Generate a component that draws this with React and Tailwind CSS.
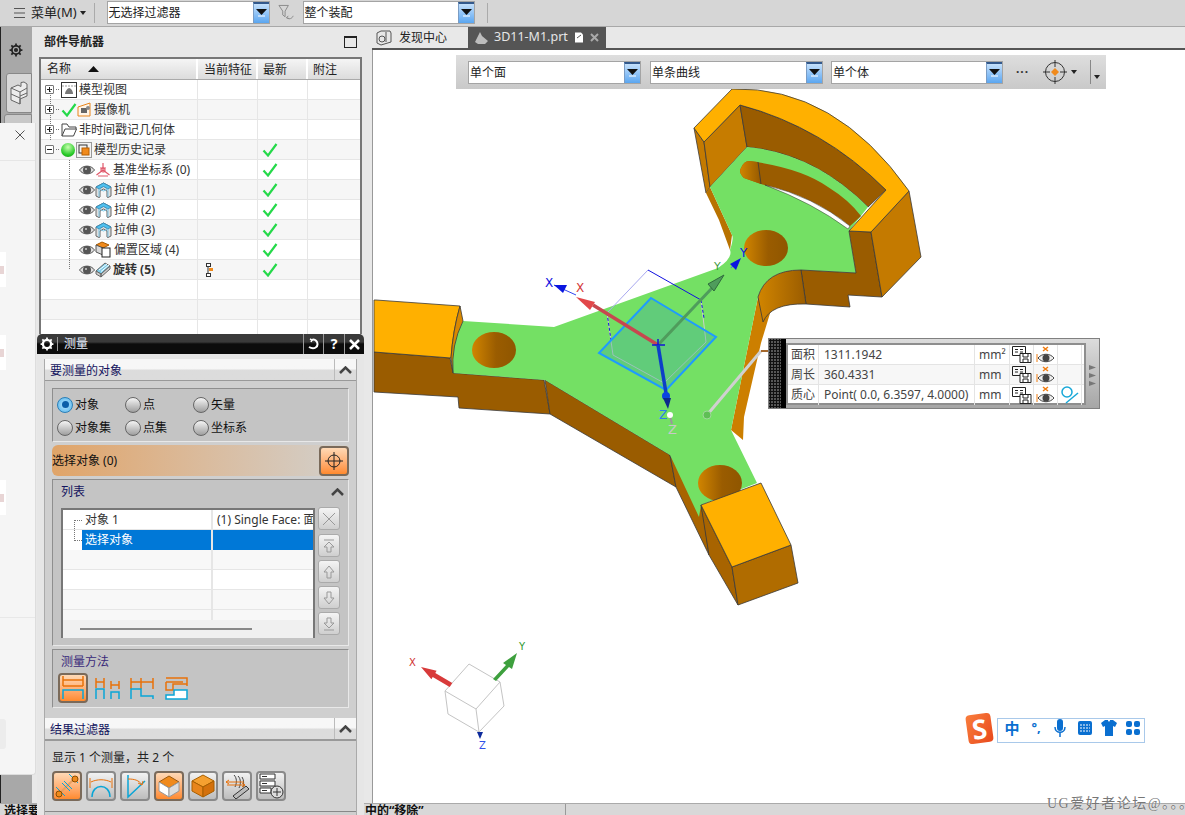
import React from "react";

const Combo = ({ text, w }) => (
  <div className={`flex h-[23px] items-stretch border border-[#a4a4a4] bg-white ${w}`}>
    <span className="flex-1 overflow-hidden whitespace-nowrap pl-[1px] text-[12px] leading-[21px] text-[#222]">{text}</span>
    <span className="flex w-[16px] items-center justify-center border-t-2 border-t-[#33598c] border-l border-l-[#7a9cc4] bg-gradient-to-b from-[#c4e0fb] to-[#5aa6f0]">
      <svg width="11" height="9" viewBox="0 0 11 9"><path d="M0 0h11L5.500 6z" fill="#111" /><path d="M2 7h7" stroke="#fff" /></svg>
    </span>
  </div>
);

const Check = () => (
  <svg width="16" height="14" viewBox="0 0 16 14" className="shrink-0"><path d="M1.500 7.500 6 12.500 14.500 1" fill="none" stroke="#25d94a" strokeWidth="2.200" /></svg>
);
const Eye = () => (
  <svg width="16" height="12" viewBox="0 0 16 12" className="shrink-0">
    <path d="M.5 6C4 .8 12 .8 15.500 6 12 11.200 4 11.200.5 6z" fill="#ddd" stroke="#555" />
    <circle cx="8" cy="6" r="4" fill="#555" />
    <circle cx="7" cy="5" r="1" fill="#ccc" />
  </svg>
);
const Extrude = () => (
  <svg width="17" height="16" viewBox="0 0 17 16" className="shrink-0">
    <path d="M1 5 8.500 1 16 5v9l-3 1.500-1-.5V9L8.500 7 5 9v6l-1 .5L1 14z" fill="#dedede" stroke="#666" />
    <path d="M1 5 8.500 1 16 5l-3 2-4.500-2.500L4 7z" fill="#4fc0ee" stroke="#3a8eb8" />
    <path d="M4 7v8M13 7v8M4 7l4.500 2L13 7" stroke="#7cc8e8" fill="none" />
  </svg>
);
const Datum = () => (
  <svg width="16" height="16" viewBox="0 0 16 16" className="shrink-0" fill="none" stroke="#e0586a" strokeWidth="1.200">
    <path d="M8 1v7M8 8 1.500 13M8 8l6.500 5M3 14h10M5 6h6" />
    <circle cx="8" cy="8" r="2" />
  </svg>
);
const Offset = () => (
  <svg width="17" height="17" viewBox="0 0 17 17" className="shrink-0">
    <path d="M1 4 7 1l7 3-6 3z" fill="#f08a1c" stroke="#a85a00" />
    <path d="M1 4l7 3v7l-7-3z" fill="#d9d9d9" stroke="#555" />
    <rect x="7" y="7" width="8" height="9" fill="#fff" stroke="#222" />
  </svg>
);
const Revolve = () => (
  <svg width="16" height="16" viewBox="0 0 16 16" className="shrink-0">
    <path d="M1 9 10 1l5 3-9 8z" fill="#7ccbe8" stroke="#666" />
    <path d="M1 9l5 3v3l-5-3zM6 12l9-8v3l-9 8z" fill="#ccc" stroke="#666" />
    <path d="M4 8l8-6M6 9.500l8-6.500" stroke="#fff" />
  </svg>
);
const Plus = ({ minus }) => (
  <span className="flex h-[9px] w-[9px] shrink-0 items-center justify-center rounded-[1px] border border-[#777] bg-white">
    <svg width="7" height="7" viewBox="0 0 7 7"><path d={minus ? "M1 3.500h5" : "M1 3.500h5M3.500 1v5"} stroke="#222" /></svg>
  </span>
);

const navRows = [
  { t: "模型视图", plus: true, icons: <svg width="16" height="16" viewBox="0 0 16 16" className="shrink-0"><rect x=".5" y=".5" width="15" height="15" fill="#fff" stroke="#333" /><path d="M1 4h14" stroke="#999" strokeDasharray="2 1" /><path d="M4 12c0-3 3-6 4-6s4 2 4 6z" fill="#777" /></svg> },
  { t: "摄像机", plus: true, icons: <><Check /><svg width="15" height="15" viewBox="0 0 15 15" className="shrink-0"><path d="M1 5 13 1v13H1z" fill="#fff5e8" stroke="#e8851c" /><rect x="4" y="6" width="6" height="5" fill="#666" /><circle cx="11" cy="6" r="2" fill="#888" /></svg></> },
  { t: "非时间戳记几何体", plus: true, icons: <svg width="16" height="14" viewBox="0 0 16 14" className="shrink-0" fill="#fff" stroke="#444"><path d="M1 13V1h5l2 3h7v2" /><path d="M1 13l3-7h11.500l-3 7z" /></svg> },
  { t: "模型历史记录", plus: true, minus: true, latest: true, icons: <><span className="h-[14px] w-[14px] shrink-0 rounded-full bg-[radial-gradient(circle_at_50%_30%,#c8ffb0,#26c926_65%,#158a15)]" /><svg width="16" height="16" viewBox="0 0 16 16" className="ml-[1px] shrink-0"><rect x=".5" y=".5" width="15" height="15" fill="#f3f3f3" stroke="#999" /><rect x="3" y="3" width="8" height="8" fill="none" stroke="#333" /><rect x="6" y="6" width="7" height="7" fill="#f08a1c" stroke="#b85f00" /></svg></> },
  { t: "基准坐标系 (0)", child: true, latest: true, icon: <Datum /> },
  { t: "拉伸 (1)", child: true, latest: true, icon: <Extrude /> },
  { t: "拉伸 (2)", child: true, latest: true, icon: <Extrude /> },
  { t: "拉伸 (3)", child: true, latest: true, icon: <Extrude /> },
  { t: "偏置区域 (4)", child: true, latest: true, icon: <Offset /> },
  { t: "旋转 (5)", child: true, latest: true, icon: <Revolve />, bold: true, cur: true },
  { t: "" }, { t: "" }, { t: "" }, { t: "" },
];

const NavRow = ({ r, i }) => (
  <div className={`flex h-[20px] border-b border-[#e6e6e6] ${i % 2 ? "bg-[#f6f6f6]" : "bg-white"}`}>
    <div className={`flex w-[157px] shrink-0 items-center border-r border-[#e6e6e6] ${r.child ? "pl-[38px]" : "pl-[4px]"}`}>
      {r.plus && <Plus minus={r.minus} />}
      {r.plus && <span className="mx-[2px] w-[3px] border-t border-dotted border-[#777]" />}
      {r.icon ? <Eye /> : null}
      {r.icon}
      {r.icons}
      {r.t && <span className={`${r.child ? "ml-[2px]" : "ml-[2px]"} whitespace-nowrap text-[12px] text-[#333] ${r.bold ? "font-bold" : ""}`}>{r.t}</span>}
    </div>
    <div className="flex w-[60px] shrink-0 items-center justify-start border-r border-[#e6e6e6] pl-[8px]">
      {r.cur && (
        <svg width="8" height="14" viewBox="0 0 8 14"><path d="M2 2v10" stroke="#333" /><rect x=".5" y=".5" width="4" height="3" fill="#fff" stroke="#333" /><rect x="3" y="5" width="4" height="3" fill="#f08a1c" /><rect x=".5" y="10.500" width="4" height="3" fill="#fff" stroke="#333" /></svg>
      )}
    </div>
    <div className="flex w-[50px] shrink-0 items-center border-r border-[#e6e6e6] pl-[4px]">{r.latest && <Check />}</div>
    <div className="flex-1" />
  </div>
);

const Radio = ({ on, t, w }) => (
  <div className={`flex items-center ${w}`}>
    <span className={`flex h-[16px] w-[16px] items-center justify-center rounded-full border ${on ? "border-[#2a7fb8] bg-[radial-gradient(circle,#bfe8ff,#4fb2ea)]" : "border-[#666] bg-gradient-to-b from-[#f5f5f5] to-[#9f9f9f]"}`}>
      {on && <span className="h-[7px] w-[7px] rounded-full bg-[#0b5ea8]" />}
    </span>
    <span className="ml-[2px] whitespace-nowrap text-[12px] text-[#111]">{t}</span>
  </div>
);

const SectionHead = ({ t }) => (
  <div className="flex h-[22px] items-stretch border-b border-[#999] bg-gradient-to-b from-[#f7f7f7] from-45% to-[#dcdcdc] to-55%">
    <span className="flex-1 pl-[5px] text-[12px] leading-[23px] text-[#14145e]">{t}</span>
    <span className="flex w-[22px] items-center justify-center border-l border-[#bbb]">
      <svg width="13" height="8" viewBox="0 0 13 8"><path d="M1 7 6.500 1.500 12 7" fill="none" stroke="#444" strokeWidth="2.500" /></svg>
    </span>
  </div>
);

const ToolBtn = ({ on, children, cls = "" }) => (
  <span className={`flex items-center justify-center rounded-[4px] border-2 ${on ? "border-[#7a6a5a] bg-gradient-to-b from-[#ffd9b5] to-[#ff8a2c]" : "border-[#8a8a8a] bg-gradient-to-b from-[#f2f2f2] to-[#bdbdbd]"} ${cls}`}>
    {children}
  </span>
);

const SideBtn = ({ d, cls = "" }) => (
  <span className={`flex h-[23px] w-[22px] items-center justify-center rounded-[3px] border border-[#aaa] bg-gradient-to-b from-[#f4f4f4] to-[#cfcfcf] ${cls}`}>
    <svg width="16" height="16" viewBox="0 0 16 16" fill="none" stroke="#999"><path d={d} /></svg>
  </span>
);

const Save = () => (
  <svg width="20" height="17" viewBox="0 0 20 17" fill="none" stroke="#222"><path d="M.5.500h13v9H.5z" /><path d="M3 3.500h3M3 6h3M8 3.500h3M8 6h3" /><path d="M8 7.500h11v9H8z" fill="#fff" /><path d="M11 8v3h5V8M11 16v-3h5v3" /></svg>
);
const EyeX = () => (
  <svg width="20" height="18" viewBox="0 0 20 18"><path d="M7 1l5 4M12 1 7 5" stroke="#f07c10" strokeWidth="1.500" /><path d="M1 8v8" stroke="#f07c10" /><path d="M2 12c4-5 12-5 16 0-4 5-12 5-16 0z" fill="#eee" stroke="#444" /><circle cx="10" cy="12" r="3.500" fill="#444" /></svg>
);

const Model = () => (
  <svg className="absolute left-0 top-0" width="813" height="753" viewBox="372 50 813 753">
    <defs>
      <linearGradient id="hole" x1="0" x2="1" y1="0" y2="0"><stop offset="0" stopColor="#d18500" /><stop offset=".55" stopColor="#9a5c00" /><stop offset="1" stopColor="#8f5600" /></linearGradient>
      <linearGradient id="fillet" x1="0" x2="1" y1="0" y2="0"><stop offset="0" stopColor="#d18500" /><stop offset="1" stopColor="#9a5c00" /></linearGradient>
      <linearGradient id="slotEnd" x1="0" x2="1" y1="0" y2="0"><stop offset="0" stopColor="#d18500" /><stop offset="1" stopColor="#955900" /></linearGradient>
    </defs>
    <g stroke="#3a3a3a" strokeWidth="0.8" strokeLinejoin="round">
      <path d="M373 352 449 358 452 373 543 380 549 414 458 408 457 397 373 392Z" fill="#9a5c00" />
      <path d="M544 380 669 455 675 487 549 414Z" fill="#9a5c00" />
      <path d="M669 455 675 487 708 555 703 520 700 505Z" fill="#a86400" />
      <path d="M757 297 770 310 760 343 743 417 742 440 730 430Z" fill="#cc7f00" stroke="none" />
      <path d="M693 128 703 142 709 187 705 193Z" fill="#c47a00" />
      <path d="M705 193 709 187 731 235 729 250 729 250 718 220Z" fill="#b87200" stroke="none" />
      <path d="M709 187 703 142 739 105 746 147Z" fill="#c67c00" />
      <path d="M739 105Q822 127 885 190L867 207Q813 153 746 147Z" fill="#9a5c00" />
      <path fill="#74e064" stroke="none" d="M746 147Q813 153 867 207L848 231 855 273 800 270Q765 270 757 297L730 430 756 483 700 505 698 517 669 455 544 380 452 373Q448 345 462 321L553 327 717 268Q732 258 729 250 733 238 731 235L709 187Z" />
      <path d="M748 161Q800 168 827 187Q848 200 860 216L848 227Q820 205 793 195L760 184 743 178Q737 172 740 168 743 161 748 161Z" fill="#9a5c00" stroke="none" />
      <path d="M748 161 757 162 760 184 743 178Q737 172 740 168 743 161 748 161Z" fill="url(#slotEnd)" stroke="none" />
      <path d="M757 162 760 184" />
      <path d="M764 185Q812 196 849 226L847 229Q812 203 764 185Z" fill="#fff" stroke="#333" strokeWidth="0.5" />
      <path d="M848 231 855 273 800 270 805 304 849 307 847 295 881 297 870 232Z" fill="#9a5c00" />
      <path d="M800 270Q765 270 757 297L762 322Q770 303 805 304Z" fill="url(#fillet)" />
      <path d="M870 232 908 191 920 257 881 297Z" fill="#c47a00" />
      <path d="M693 128 731 89Q834 86 908 191L870 232 848 231 885 190Q822 127 739 105L703 142Z" fill="#ffb000" />
      <ellipse cx="493" cy="350" rx="22" ry="18" fill="url(#hole)" stroke="none" />
      <ellipse cx="765" cy="248" rx="22" ry="18" fill="url(#hole)" stroke="none" />
      <ellipse cx="719" cy="483" rx="22" ry="18" fill="url(#hole)" stroke="none" />
      <path d="M373 300 375 300 459 306 Q452 330 450 358L373 352Z" fill="#ffb000" />
      <path d="M459 306 462 321Q450 345 452 373L450 358Q452 330 459 306Z" fill="#d98800" />
      <path d="M700 505 731 567 737 605 708 555Z" fill="#a86400" />
      <path d="M731 567 790 545 797 583 737 605Z" fill="#b06c00" />
      <path d="M700 505 760 483 790 545 731 567Z" fill="#ffb000" />
    </g>
    <path d="M606 313 647 270" stroke="#a8a8f0" fill="none" />
    <path d="M647 270 700 300" stroke="#1010e0" fill="none" />
    <path d="M700 300 705 342 663 383 612 355 606 313" stroke="#c9d2c9" fill="none" />
    <path d="M606 313 610 340M700 300 703 318" stroke="#1515e0" strokeDasharray="3 2" fill="none" />
    <path d="M650 298 715 337 665 390 598 353Z" fill="#3ea6a4" fillOpacity="0.35" stroke="#1e9bff" strokeWidth="2" />
    <path d="M706 415 760 351" stroke="#d0d0d0" strokeWidth="3" />
    <path d="M760 351H768" stroke="#a5682c" strokeWidth="2" />
    <circle cx="706" cy="415" r="4" fill="#5fbf55" stroke="#9fd89a" />
    <path d="M657 345 712 287" stroke="#4f9c5c" strokeWidth="3" />
    <path d="M723 275 707 284 713 291Z" fill="#4f9c5c" stroke="#2f6c3c" />
    <path d="M730 268 736 261" stroke="#4466ff" />
    <path d="M740 258 729 264 735 270Z" fill="#0a16e0" />
    <path d="M657 345 592 305" stroke="#c7474f" strokeWidth="3.500" />
    <path d="M575 297 594 302 589 310Z" fill="#e2474a" />
    <path d="M575 295 553 285" stroke="#3344ee" />
    <path d="M553 285 566 285 562 293Z" fill="#0a16e0" />
    <path d="M651 345H664M657 339V350" stroke="#1212d8" strokeWidth="1.500" />
    <path d="M657 345 665 393" stroke="#0d3fc8" strokeWidth="3.500" />
    <circle cx="665" cy="396" r="4" fill="#0a44e0" />
    <path d="M662 398 670 398 667 409Z" fill="#0c2a8c" />
    <path d="M669 416 671 424" stroke="#999" strokeWidth="2" />
    <circle cx="669" cy="415" r="3" fill="#fff" />
    <g fontFamily="'DejaVu Sans', sans-serif" fontSize="12">
      <text x="544" y="287" fill="#1010e0">X</text>
      <text x="575" y="292" fill="#d43b3b">X</text>
      <text x="713" y="270" fill="#3f9a3f" fontSize="11">Y</text>
      <text x="739" y="257" fill="#1010e0">Y</text>
      <text x="658" y="419" fill="#2f7cf0">Z</text>
      <text x="667" y="434" fill="#c8c8c8" fontSize="13">Z</text>
    </g>
    <g fill="none" stroke="#c4c4c4" strokeWidth="1">
      <path d="M468 664 499 682 475 709 444 691Z" />
      <path d="M475 709 478 732 447 714 444 691M499 682 503 706 478 732" />
    </g>
    <path d="M492 679 505 665 502 663 516 653 511 669 508 667 495 681Z" fill="#3ea03e" />
    <path d="M451.300 682.900 434.300 672.900 435.600 670.700 420 667 430.400 679.300 431.700 677.100 448.700 687.100Z" fill="#d83a3a" />
    <path d="M476 732 482 732 479 739Z" fill="#0c2a9c" />
    <g fontFamily="'DejaVu Sans', sans-serif" fontSize="10">
      <text x="408" y="666" fill="#cf3030">X</text>
      <text x="518" y="650" fill="#2f9a2f">Y</text>
      <text x="478" y="749" fill="#3050e8">Z</text>
    </g>
  </svg>
);

export default function App() {
  return (
    <div className="relative flex h-[815px] w-[1185px] flex-col overflow-hidden bg-white [font-family:'Noto_Sans','Noto_Sans_CJK_SC',sans-serif]">
      {/* top toolbar */}
      <div className="flex h-[27px] shrink-0 items-center border-b border-[#a8a8a8] bg-[#d6d6d6] pb-[1px]">
        <svg width="11" height="10" viewBox="0 0 11 10" className="ml-[14px]"><path d="M0 .500h11M0 5h11M0 9.500h11" stroke="#555" /></svg>
        <span className="ml-[6px] text-[13px] text-[#222]">菜单(M)</span>
        <svg width="6" height="4" viewBox="0 0 6 4" className="ml-[3px]"><path d="M0 0h6L3 4z" fill="#222" /></svg>
        <span className="ml-[8px] h-[20px] border-l border-[#aaa]" />
        <Combo text="无选择过滤器" w="ml-[12px] w-[163px]" />
        <svg width="17" height="18" viewBox="0 0 18 18" fill="none" stroke="#888" className="ml-[8px]"><path d="M1 1h10L7.500 7v6L5 11V7z" /><path d="M9 14c3 2 6 1 7-2M9 14l2-2M9 14l3 1" /></svg>
        <Combo text="整个装配" w="ml-[8px] w-[172px]" />
        <span className="ml-[12px] h-[20px] border-l border-[#aaa]" />
      </div>

      <div className="flex min-h-0 flex-1">
        {/* left resource strip */}
        <div className="flex w-[32px] shrink-0 flex-col items-end border-l border-l-[#222] bg-[#a8a8a8]">
          <div className="flex h-[46px] w-full items-center justify-center pr-[1px]">
            <svg width="14" height="14" viewBox="0 0 24 24" fill="none" stroke="#222" strokeWidth="3"><circle cx="12" cy="12" r="7" /><circle cx="12" cy="12" r="2" /><path d="M12 1v4M12 19v4M1 12h4M19 12h4M4 4l3 3M17 17l3 3M4 20l3-3M17 7l3-3" /></svg>
          </div>
          <div className="flex h-[40px] w-[26px] items-center justify-center rounded-l-[3px] border border-[#888] bg-[#d8d8d8]">
            <svg width="18" height="24" viewBox="0 0 18 24" fill="#ececec" stroke="#666"><path d="M1 7l7-3 3 1.500V1.500L14 1l3 2v12l-7 3v5l-9-4z" /><path d="M1 7l9 4v12M10 11l7-4M10 15l7-3M1 13l9 4" fill="none" /></svg>
          </div>
          <div className="mt-[1px] h-[14px] w-[28px] rounded-tl-[3px] border border-[#888] bg-[#c8c8c8]" />
        </div>

        {/* navigator */}
        <div className="w-[340px] shrink-0 bg-[#e8e8e8]">
          <div className="flex h-[30px] items-center justify-between pl-[12px] pr-[15px]">
            <span className="text-[12px] font-bold text-[#222]">部件导航器</span>
            <span className="h-[12px] w-[13px] border border-[#222] border-t-2" />
          </div>
          <div className="relative ml-[7px] w-[323px] border-x-2 border-t-2 border-[#777]">
            <div className="flex h-[21px] border-b border-[#aaa] bg-gradient-to-b from-[#f5f5f5] to-[#dcdcdc] text-[12px] leading-[22px] text-[#222]">
              <span className="flex w-[157px] items-center border-r-2 border-[#fff] pl-[6px]">
                名称
                <svg width="11" height="6" viewBox="0 0 11 6" className="ml-[17px]"><path d="M0 6 5.500 0 11 6z" fill="#111" /></svg>
              </span>
              <span className="w-[60px] border-r-2 border-[#fff] pl-[6px]">当前特征</span>
              <span className="w-[50px] border-r-2 border-[#fff] pl-[5px]">最新</span>
              <span className="pl-[5px]">附注</span>
            </div>
            {navRows.map((r, i) => <NavRow key={i} r={r} i={i} />)}
            <span className="absolute left-[9px] top-[30px] h-[51px] border-l border-dotted border-[#777]" />
            <span className="absolute left-[28px] top-[101px] h-[109px] border-l border-dotted border-[#777]" />
          </div>
        </div>

        {/* main area */}
        <div className="flex min-w-0 flex-1 flex-col">
          <div className="flex h-[23px] shrink-0 border-b-2 border-[#555] bg-[#e8e8e8] pl-[3px]">
            <div className="flex w-[93px] items-center text-[12px] text-[#222]">
              <svg width="16" height="16" viewBox="0 0 16 16" fill="none" stroke="#555" className="mr-[7px] ml-[1px]"><path d="M1 3l4-2h9l1 2v9l-10 3-4-2z" /><circle cx="6" cy="9" r="3" /><path d="M10 2v10" /></svg>
              发现中心
            </div>
            <div className="flex w-[138px] items-center bg-[#555] pl-[6px] text-[12.500px] text-[#e6e6e6]">
              <svg width="15" height="14" viewBox="0 0 15 14" className="mr-[5px]"><path d="M1 11 6 1l2 4 6 5-3 3H4z" fill="#bdbdbd" /></svg>
              3D11-M1.prt
              <svg width="10" height="11" viewBox="0 0 10 11" className="ml-[6px]"><path d="M1 .500h6l2 2v8H1z" fill="#fff" /><path d="M3 6l4-3" stroke="#555" /></svg>
              <svg width="9" height="9" viewBox="0 0 9 9" className="ml-[6px]"><path d="M1 1l7 7M8 1 1 8" stroke="#aaa" strokeWidth="2" /></svg>
            </div>
          </div>
          <div className="relative flex-1 border-l border-[#999] bg-white">
            <Model />
            {/* floating selection bar */}
            <div className="absolute left-[83px] top-[5px] flex h-[34px] w-[650px] items-center bg-gradient-to-b from-[#dedede] to-[#c9c9c9] pl-[12px]">
              <Combo text="单个面" w="w-[173px]" />
              <Combo text="单条曲线" w="ml-[9px] w-[173px]" />
              <Combo text="单个体" w="ml-[8px] w-[172px]" />
              <span className="ml-[13px] text-[12px] font-bold tracking-[1px] text-[#333]">···</span>
              <svg width="26" height="26" viewBox="0 0 26 26" fill="none" stroke="#333" className="ml-[13px]"><circle cx="13" cy="13" r="9.500" /><path d="M13 1v7M13 18v7M1 13h7M18 13h7" /><path d="M13 9l4 4-4 4-4-4z" fill="#f08a1c" stroke="none" /></svg>
              <svg width="6" height="4" viewBox="0 0 6 4" className="ml-[3px]"><path d="M0 0h6L3 4z" fill="#222" /></svg>
              <span className="ml-[13px] h-[24px] border-l border-[#888]" />
              <svg width="6" height="4" viewBox="0 0 6 4" className="ml-[3px] mt-[10px]"><path d="M0 0h6L3 4z" fill="#222" /></svg>
            </div>
          </div>
        </div>
      </div>

      {/* status bar */}
      <div className="flex h-[12px] shrink-0 overflow-hidden border-t border-[#aaa] bg-[#d8d8d8] text-[12px] font-bold leading-[14px] text-[#111]">
        <span className="w-[365px] pl-[4px]">选择要</span>
        <span className="w-[201px] border-r border-[#999]">中的“移除”</span>
      </div>

      {/* slide-in panel over the strip */}
      <div className="absolute left-0 top-[123px] flex h-[652px] w-[36px] flex-col rounded-br-[3px] border-r border-b border-[#ddd] bg-[#f5f5f5]">
        <div className="flex h-[38px] items-start justify-end border-b border-[#e6e6e6] pr-[10px] pt-[7px]">
          <svg width="10" height="10" viewBox="0 0 10 10"><path d="M.5.500l9 9M9.500.500l-9 9" stroke="#555" /></svg>
        </div>
        <div className="mt-[91px] flex h-[35px] w-[6px] items-center bg-white"><span className="h-[8px] w-[4px] bg-[#e8d5d5]" /></div>
        <div className="mt-[48px] flex h-[35px] w-[6px] items-center bg-white"><span className="h-[8px] w-[4px] bg-[#e8d5d5]" /></div>
        <div className="mt-[110px] flex h-[35px] w-[6px] items-center bg-white"><span className="h-[8px] w-[4px] bg-[#e8d5d5]" /></div>
        <div className="mt-[102px] border-t border-[#e8e8e8]" />
        <div className="mt-[101px] h-[30px] w-[6px] rounded-r-[3px] bg-[#ececec]" />
      </div>

      {/* measure dialog */}
      <div className="absolute left-[37px] top-[334px] flex h-[481px] w-[327px] flex-col bg-[#e6e6e6]">
        <div className="flex h-[20px] shrink-0 items-center rounded-t-[5px] bg-gradient-to-b from-[#3a3a3a] from-40% to-[#0c0c0c] to-50% text-white">
          <span className="flex w-[21px] items-center justify-center border-r border-[#999]">
            <svg width="14" height="14" viewBox="0 0 24 24" fill="none" stroke="#fff" strokeWidth="4"><circle cx="12" cy="12" r="7" /><path d="M12 1v4M12 19v4M1 12h4M19 12h4M4 4l3 3M17 17l3 3M4 20l3-3M17 7l3-3" strokeWidth="3" /></svg>
          </span>
          <span className="ml-[6px] w-[239px] text-[12px] leading-[20px] text-[#e8f0ff]">测量</span>
          <span className="flex h-[20px] w-[20px] items-center justify-center border-l border-[#999]">
            <svg width="12" height="12" viewBox="0 0 12 12" fill="none" stroke="#fff" strokeWidth="2"><path d="M1 9c5 3 10 0 8-5-1-2-3-3-5-2" /><path d="M2 1l2 1-1 2" strokeWidth="1.500" /></svg>
          </span>
          <span className="flex h-[20px] w-[21px] items-center justify-center border-l border-[#999] text-[14px] font-bold leading-none">?</span>
          <span className="flex h-[20px] flex-1 items-center justify-center border-l border-[#999]">
            <svg width="11" height="11" viewBox="0 0 11 11"><path d="M1 1l9 9M10 1l-9 9" stroke="#fff" strokeWidth="2.500" /></svg>
          </span>
        </div>
        <div className="mx-[7px] mt-[5px] flex-1 border-x border-[#aaa] bg-[#cfcfcf]">
          <SectionHead t="要测量的对象" />
          <div className="ml-[7px] mt-[7px] h-[54px] w-[297px] border border-[#8e8e8e] border-r-[#e8e8e8] border-b-[#e8e8e8] bg-[#c4c4c4] pl-[4px] pt-[4px]">
            <div className="flex h-[23px] items-center">
              <Radio on t="对象" w="w-[68px]" />
              <Radio t="点" w="w-[68px]" />
              <Radio t="矢量" w="" />
            </div>
            <div className="flex h-[23px] items-center">
              <Radio t="对象集" w="w-[68px]" />
              <Radio t="点集" w="w-[68px]" />
              <Radio t="坐标系" w="" />
            </div>
          </div>
          <div className="ml-[7px] mt-[3px] flex h-[31px] w-[297px] items-center justify-between rounded-l-[6px] bg-gradient-to-r from-[#e0a468] to-[#d2d0cc] text-[12px] text-[#111]">
            <span>选择对象 (0)</span>
            <ToolBtn on cls="h-[30px] w-[30px]">
              <svg width="20" height="20" viewBox="0 0 20 20" fill="none" stroke="#222"><circle cx="10" cy="10" r="6" /><path d="M10 1v18M1 10h18" /></svg>
            </ToolBtn>
          </div>
          <div className="ml-[7px] mt-[3px] h-[167px] w-[297px] border border-[#8e8e8e] border-r-[#e8e8e8] border-b-[#e8e8e8] bg-[#c4c4c4]">
            <div className="flex h-[28px] items-center justify-between pb-[4px] pl-[8px] pr-[4px]">
              <span className="text-[12px] text-[#14145e]">列表</span>
              <svg width="13" height="8" viewBox="0 0 13 8"><path d="M1 7 6.500 1.500 12 7" fill="none" stroke="#444" strokeWidth="2.500" /></svg>
            </div>
            <div className="flex items-start">
              <div className="relative ml-[8px] h-[130px] w-[254px] border-2 border-[#777] bg-white text-[12px] text-[#333]">
                <div className="flex h-[20px] border-b border-[#e6e6e6]">
                  <span className="w-[150px] border-r-2 border-[#e6e6e6] pl-[22px] leading-[20px]">对象 1</span>
                  <span className="flex-1 overflow-hidden whitespace-nowrap pl-[4px] leading-[20px]">(1) Single Face: 面</span>
                </div>
                <div className="flex h-[20px]">
                  <span className="ml-[19px] w-[131px] border-r-2 border-[#e6e6e6] bg-[#0078d7] pl-[3px] leading-[20px] text-white">选择对象</span>
                  <span className="flex-1 bg-[#0078d7]" />
                </div>
                {[0, 1, 2].map((i) => (
                  <div key={i} className={`flex h-[20px] border-b border-[#e6e6e6] ${i % 2 ? "bg-white" : "bg-[#f8f8f8]"}`}><span className="w-[150px] border-r-2 border-[#e6e6e6]" /></div>
                ))}
                <div className="flex h-[10px] bg-[#f8f8f8]"><span className="w-[150px] border-r-2 border-[#e6e6e6]" /></div>
                <div className="flex h-[18px] items-center bg-[#f0f0f0] pl-[17px]"><span className="h-[2px] w-[172px] bg-[#888]" /></div>
                <span className="absolute left-[11px] top-[10px] h-[21px] w-[8px] border-l border-t border-b border-dotted border-[#777]" />
              </div>
              <div className="ml-[3px] -mt-[1px] flex flex-col gap-[3px]">
                <SideBtn d="M2 2l12 12M14 2 2 14" />
                <SideBtn cls="mt-[1px]" d="M3 2h10M8 4l5 5h-3v5H6V9H3z" />
                <SideBtn d="M8 2l5 6h-3v6H6V8H3z" />
                <SideBtn d="M8 14l5-6h-3V2H6v6H3z" />
                <SideBtn d="M3 14h10M8 12l5-5h-3V2H6v5H3z" />
              </div>
            </div>
          </div>
          <div className="ml-[7px] mt-[3px] h-[59px] w-[297px] border border-[#8e8e8e] border-r-[#e8e8e8] border-b-[#e8e8e8] bg-[#c4c4c4]">
            <div className="pl-[8px] pt-[3px] text-[12px] leading-[17px] text-[#3a2a7a]">测量方法</div>
            <div className="ml-[5px] mt-[3px] flex items-center">
              <ToolBtn on cls="h-[30px] w-[30px]">
                <svg width="26" height="26" viewBox="0 0 26 26" fill="none" strokeWidth="1.500"><path d="M3 1v10M23 1v10M3 5h20" stroke="#e8710a" /><path d="M3 24V15h20v9" stroke="#0aa5d6" /><path d="M3 11h20" stroke="#e8710a" /></svg>
              </ToolBtn>
              <svg width="25" height="23" viewBox="0 0 25 23" fill="none" strokeWidth="1.500" className="ml-[7px]"><path d="M1 1v10M9 1v10M1 5h8M16 4v8M24 4v8M16 8h8" stroke="#e8710a" /><path d="M1 22V12h8v10M16 22v-7h8v7" stroke="#0aa5d6" /></svg>
              <svg width="24" height="23" viewBox="0 0 24 23" fill="none" strokeWidth="1.500" className="ml-[10px]"><path d="M1 1v11M11 1v11M23 1v11M1 5h22" stroke="#e8710a" /><path d="M1 22V12h10v7h12v3" stroke="#0aa5d6" /></svg>
              <svg width="23" height="23" viewBox="0 0 23 23" fill="none" strokeWidth="1.500" className="ml-[11px]"><path d="M1 1h21v8M1 5h17M1 5v8h7V7h14" stroke="#e8710a" /><path d="M1 22v-4h8v-5h13v9z" fill="#fff" stroke="#0aa5d6" /></svg>
            </div>
          </div>
          <div className="mt-[10px]"><SectionHead t="结果过滤器" /></div>
          <div className="h-[71px] border-t border-[#999] bg-[#d4d4d4] pl-[7px]">
            <div className="pt-[8px] text-[12px] leading-[17px] text-[#222]">显示 1 个测量，共 2 个</div>
            <div className="mt-[5px] flex gap-[4px]">
              <ToolBtn on cls="h-[30px] w-[30px]">
                <svg width="26" height="26" viewBox="0 0 26 26" fill="none"><path d="M5 21 21 5" stroke="#e8a060" strokeWidth="2" /><path d="M2 14l9 9M15 1l9 9M8 10l8 8M10 8l8 8" stroke="#0aa5d6" /><circle cx="21" cy="6" r="3" fill="#f08a1c" stroke="#8a4c00" /><circle cx="5" cy="21" r="3" fill="#f08a1c" stroke="#8a4c00" /></svg>
              </ToolBtn>
              <ToolBtn cls="h-[30px] w-[30px]">
                <svg width="26" height="26" viewBox="0 0 26 26" fill="none"><path d="M2 5v10M24 5v10" stroke="#e8710a" /><path d="M3 9c6-3 14-3 20 0" stroke="#e8710a" /><path d="M4 24c0-14 18-14 18 0" stroke="#0aa5d6" strokeWidth="1.500" /></svg>
              </ToolBtn>
              <ToolBtn cls="h-[30px] w-[30px]">
                <svg width="26" height="26" viewBox="0 0 26 26" fill="none"><path d="M6 2v22l17-16" stroke="#0aa5d6" strokeWidth="1.500" /><path d="M6 6c6 0 11 1 14 6M20 12l1-4M20 12l-4-2" stroke="#e8710a" /></svg>
              </ToolBtn>
              <ToolBtn on cls="h-[30px] w-[30px]">
                <svg width="24" height="24" viewBox="0 0 24 24"><path d="M2 8l10-6 10 6-10 6z" fill="#f08a1c" stroke="#9a5a10" /><path d="M2 8l10 6v9L2 17z" fill="#fff" stroke="#999" /><path d="M22 8l-10 6v9l10-6z" fill="#ddd" stroke="#999" /></svg>
              </ToolBtn>
              <ToolBtn cls="h-[30px] w-[30px]">
                <svg width="24" height="24" viewBox="0 0 24 24"><path d="M1 7l11-6 11 6-11 6z" fill="#f5a030" stroke="#a85f00" /><path d="M1 7l11 6v10L1 17z" fill="#e8851c" stroke="#a85f00" /><path d="M23 7 12 13v10l11-6z" fill="#d4710c" stroke="#a85f00" /></svg>
              </ToolBtn>
              <ToolBtn cls="h-[30px] w-[30px]">
                <svg width="26" height="26" viewBox="0 0 26 26" fill="none"><path d="M10 2c3 3 3 8 1 12M14 3c3 3 3 8 1 12M18 4c2 3 2 7 1 10" stroke="#444" /><path d="M2 9h18M2 9l3-2M2 9l3 2M3 12h18M21 12l-3-2M21 12l-3 2" stroke="#e8710a" /><path d="M9 23 22 13l3 3-13 10z" fill="#bbb" stroke="#333" /></svg>
              </ToolBtn>
              <ToolBtn cls="h-[30px] w-[30px]">
                <svg width="26" height="26" viewBox="0 0 26 26" fill="none" stroke="#333"><path d="M2 1h15v5H2zM2 8h15v5H2zM2 15h11v5H2z" fill="#fff" /><path d="M4 3.500h5M4 10.500h5M4 17.500h5" /><circle cx="19" cy="19" r="6" fill="#ddd" /><path d="M19 15v8M15 19h8" /></svg>
              </ToolBtn>
            </div>
          </div>
          <div className="h-[1px] bg-[#888]" />
        </div>
      </div>

      {/* measurement label */}
      <div className="absolute left-[768px] top-[338px] flex h-[71px] w-[332px] items-stretch border border-[#808080] bg-gradient-to-b from-[#dcdcdc] to-[#a6a6a6]">
        <span className="w-[12px] bg-[#666] bg-[radial-gradient(#111_1px,transparent_1.500px)] bg-[size:3px_3px]" />
        <span className="w-[5px] bg-black" />
        <div className="mt-[4px] h-[62px] w-[300px] border-2 border-[#8e8e8e] bg-white text-[12px] leading-[20px] text-[#444]">
          {[
            { a: "面积", v: "1311.1942", u: "mm²" },
            { a: "周长", v: "360.4331", u: "mm" },
            { a: "质心", v: "Point( 0.0, 6.3597, 4.0000)", u: "mm", last: true },
          ].map((r, i) => (
            <div key={i} className={`flex h-[20px] ${i < 2 ? "border-b border-[#e4e4e4]" : ""} ${i === 1 ? "bg-[#f7f7f7]" : ""}`}>
              <span className="w-[31px] border-r border-[#e4e4e4] pl-[3px]">{r.a}</span>
              <span className="w-[156px] whitespace-nowrap border-r border-[#e4e4e4] pl-[5px]">{r.v}</span>
              <span className="w-[35px] border-r border-[#e4e4e4] pl-[4px]">{r.u}</span>
              <span className="flex w-[24px] items-center justify-center border-r border-[#e4e4e4]"><Save /></span>
              <span className="flex w-[24px] items-center justify-center border-r border-[#e4e4e4]"><EyeX /></span>
              <span className="flex w-[24px] items-center justify-center border-r border-[#e4e4e4]">
                {r.last && <svg width="18" height="18" viewBox="0 0 18 18" fill="none" stroke="#19a8d8" strokeWidth="1.500"><circle cx="6" cy="6" r="5" /><path d="M5 17 17 7" /></svg>}
              </span>
            </div>
          ))}
        </div>
        <div className="flex flex-1 flex-col items-center justify-center gap-[3px] pt-[4px]">
          {[0, 1, 2].map((i) => <svg key={i} width="7" height="5" viewBox="0 0 7 5"><path d="M0 0l7 2.500L0 5z" fill="#777" /></svg>)}
        </div>
      </div>

      {/* input method bar */}
      <div className="absolute left-[967px] top-[713px] flex h-[30px] w-[178px] items-center">
        <span className="absolute left-[30px] top-[5px] h-[25px] w-[148px] border border-[#a9c9ea] bg-white" />
        <span className="relative flex h-[29px] w-[29px] rotate-[-8deg] items-center justify-center rounded-[4px] bg-gradient-to-br from-[#f97d3c] to-[#e8481c] text-[27px] font-bold leading-none text-white">S</span>
        <div className="relative ml-[8px] flex items-center text-[#0a6fd0]">
          <span className="w-[24px] text-center text-[15px] font-bold">中</span>
          <span className="w-[24px] text-center text-[13px] font-bold">°,</span>
          <svg width="24" height="18" viewBox="0 0 24 18" fill="currentColor"><rect x="9" y="0" width="6" height="12" rx="3" /><path d="M7 8c0 7 10 7 10 0M12 13v5" fill="none" stroke="currentColor" strokeWidth="1.500" /></svg>
          <svg width="24" height="14" viewBox="0 0 24 14" className="ml-[1px]"><rect x="5" y="0" width="14" height="14" rx="2" fill="currentColor" /><path d="M7 4h10M7 7h10M7 10h10" stroke="#fff" strokeDasharray="2 1" /></svg>
          <svg width="24" height="16" viewBox="0 0 24 16" fill="currentColor"><path d="M8 0h3c0 2 2 2 2 0h3l4 3-2 4-2-1v10H8V6L6 7 4 3z" /></svg>
          <svg width="24" height="14" viewBox="0 0 24 14" fill="currentColor"><rect x="5" y="0" width="6" height="6" rx="2" /><rect x="13" y="0" width="6" height="6" rx="2" /><rect x="5" y="8" width="6" height="6" rx="2" /><rect x="13" y="8" width="6" height="6" rx="2" /></svg>
        </div>
      </div>

      {/* forum watermark */}
      <span className="absolute left-[1047px] top-[795px] whitespace-nowrap text-[14px] leading-[18px] tracking-[1.500px] text-[#777] [font-family:'Liberation_Serif','Noto_Sans_CJK_SC',serif] [text-shadow:0_0_1px_#fff]">UG爱好者论坛@。。。</span>
    </div>
  );
}
